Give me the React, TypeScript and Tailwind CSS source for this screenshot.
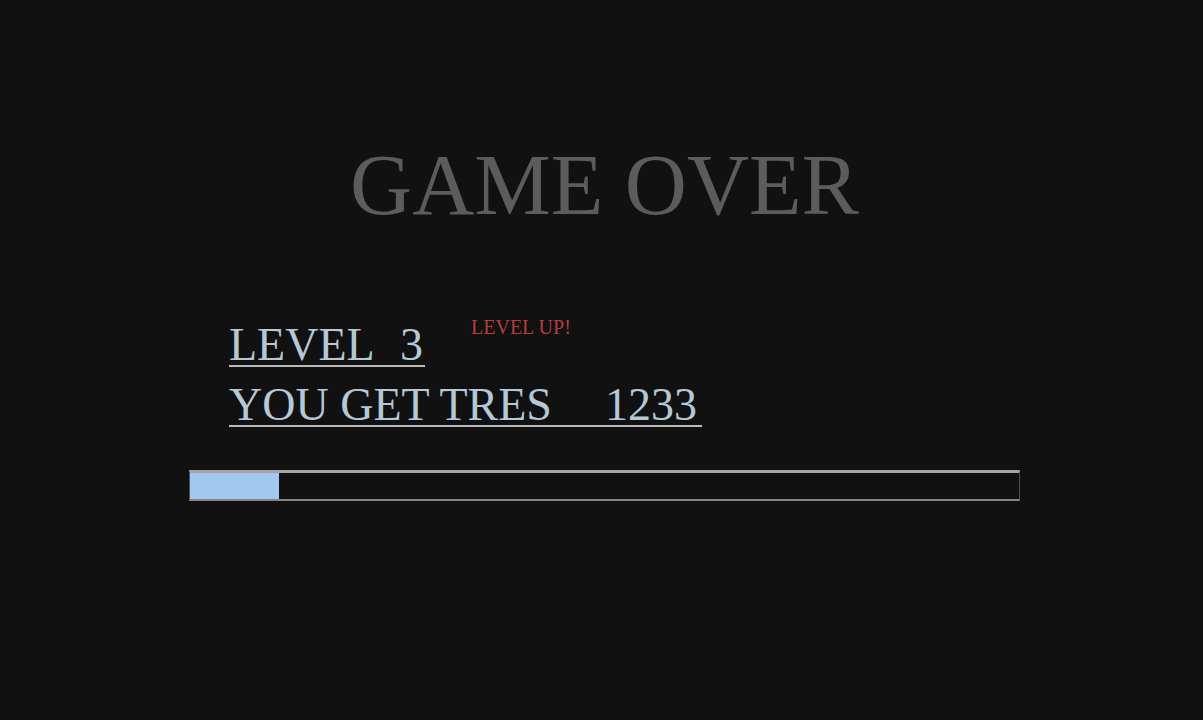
const experience = { value: 89, max: 830 };

export default function App() {
  const percent = (experience.value / experience.max) * 100;

  return (
    <main className="min-h-screen bg-[#111111] pt-[137px] pr-[183px] pl-[189px] font-['Liberation_Serif',serif]">
      <h1 className="text-center text-[86px] leading-[96px] whitespace-nowrap text-[#5c5c5c]">
        GAME OVER
      </h1>

      <section className="mt-[92px] flex flex-col gap-[18px] pl-10 text-[46px] leading-[40px] whitespace-nowrap text-[#b4c8d6]">
        <div className="flex items-start gap-[46px]">
          <p className="flex w-[196px] justify-between border-b-2 border-[#bababa] pr-[2px]">
            <span>LEVEL</span>
            <span>3</span>
          </p>
          <strong className="-mt-2 text-[20px] leading-[20px] font-normal text-[#b93c40]">
            LEVEL UP!
          </strong>
        </div>
        <p className="flex w-[473px] justify-between border-b-2 border-[#bababa] pr-[5px]">
          <span>YOU GET TRES</span>
          <span>1233</span>
        </p>
      </section>

      <div
        role="progressbar"
        aria-label="Experience"
        aria-valuenow={experience.value}
        aria-valuemin={0}
        aria-valuemax={experience.max}
        className="mt-[43px] h-[31px] border-x border-t-[3px] border-b-2 border-x-[#4c4c4c] border-t-[#a4a4a4] border-b-[#858585]"
      >
        <div className="h-full bg-[#a0c8f0]" style={{ width: `${percent}%` }} />
      </div>
    </main>
  );
}
